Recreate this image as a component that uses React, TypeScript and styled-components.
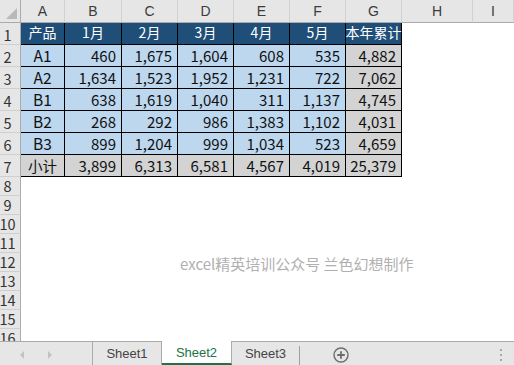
import styled, { createGlobalStyle } from "styled-components"

const GlobalStyle = createGlobalStyle`
  html, body {
    margin: 0;
    padding: 0;
    background: #ffffff;
    overflow: hidden;
  }
  * {
    box-sizing: border-box;
  }
`

const CJK_FONT = `"Noto Sans CJK SC", "Noto Sans", sans-serif`

const Window = styled.div`
  width: 514px;
  height: 365px;
  display: flex;
  flex-direction: column;
  background: #ffffff;
  overflow: hidden;
`

const SheetArea = styled.div`
  position: relative;
  height: 341px;
  overflow: hidden;
`

const Grid = styled.div`
  display: grid;
  grid-template-columns: 21px 44px 57px 56px 56px 56px 56px 56px 71px 1fr;
  grid-template-rows: 23px repeat(7, 22px) repeat(9, 19px);
`

const Corner = styled.div`
  position: relative;
  background: #e6e6e6;
  border-right: 1px solid #ababab;
  border-bottom: 1px solid #ababab;

  &::after {
    content: "";
    position: absolute;
    right: 3px;
    bottom: 3px;
    width: 0;
    height: 0;
    border-left: 11px solid transparent;
    border-bottom: 11px solid #b9b9b9;
  }
`

const ColHead = styled.div`
  display: flex;
  align-items: flex-end;
  justify-content: center;
  padding-bottom: 2px;
  background: #e6e6e6;
  border-right: 1px solid #d2d2d2;
  border-bottom: 1px solid #ababab;
  font-family: "Liberation Sans", sans-serif;
  font-size: 14px;
  line-height: 17px;
  color: #3c3c3c;
`

const RowHead = styled.div`
  display: flex;
  align-items: flex-end;
  justify-content: center;
  padding-right: 5px;
  padding-bottom: 0;
  background: #e6e6e6;
  border-right: 1px solid #ababab;
  border-bottom: 1px solid #cfcfcf;
  font-family: ${CJK_FONT};
  font-size: 14.5px;
  line-height: 18px;
  color: #333333;
  white-space: nowrap;
`

type Variant = "head" | "body" | "sum" | "total"

const cellBg: Record<Variant, string> = {
  head: "#1f4e78",
  body: "#bdd7ee",
  sum: "#d3d3d3",
  total: "#d3d3d3",
}

const Cell = styled.div<{ $variant: Variant }>`
  display: flex;
  align-items: flex-end;
  justify-content: flex-end;
  padding: 0 5px 1px 0;
  background: ${(p) => cellBg[p.$variant]};
  border-right: 1px solid #000000;
  border-bottom: 1px solid #000000;
  color: ${(p) => (p.$variant === "head" ? "#ffffff" : "#111111")};
  font-family: ${CJK_FONT};
  font-size: 15px;
  line-height: 19px;
  white-space: nowrap;
`

const LabelCell = styled(Cell)<{ $cjk?: boolean }>`
  justify-content: center;
  padding-right: 0;
  font-size: ${(p) => (p.$cjk ? "14.5px" : "15.5px")};
`

const HeadCell = styled(Cell)`
  justify-content: center;
  padding: 0 0 2px 0;
  font-size: 14px;
`

const Empty = styled.div``

const Watermark = styled.div`
  position: absolute;
  left: 180px;
  top: 254px;
  font-family: ${CJK_FONT};
  font-size: 15px;
  line-height: 20px;
  color: #b0b0b0;
  white-space: nowrap;
`

const TabBar = styled.div`
  flex: 1;
  display: flex;
  align-items: stretch;
  background: #e6e6e6;
  border-top: 1px solid #ababab;
  position: relative;
`

const NavArea = styled.div`
  width: 93px;
  display: flex;
  align-items: center;
  gap: 24px;
  padding-left: 20px;
  border-right: 1px solid #ababab;
`

const Arrow = styled.span<{ $dir: "left" | "right" }>`
  width: 0;
  height: 0;
  margin-top: 3px;
  border-top: 4px solid transparent;
  border-bottom: 4px solid transparent;
  ${(p) =>
    p.$dir === "left"
      ? "border-right: 4px solid #c2c2c2;"
      : "border-left: 4px solid #c2c2c2;"}
`

const Tab = styled.div<{ $active?: boolean; $width: number }>`
  width: ${(p) => p.$width}px;
  display: flex;
  align-items: center;
  justify-content: center;
  font-family: "Liberation Sans", sans-serif;
  font-size: 13px;
  color: ${(p) => (p.$active ? "#217346" : "#444444")};
  background: ${(p) => (p.$active ? "#ffffff" : "transparent")};
  border-right: 1px solid #ababab;
  border-bottom: ${(p) => (p.$active ? "2px solid #217346" : "none")};
  margin-top: ${(p) => (p.$active ? "-1px" : "0")};
  padding-top: ${(p) => (p.$active ? "1px" : "0")};
`

const LastTab = styled(Tab)`
  border-right: none;
`

const TabSep = styled.div`
  width: 1px;
  margin-top: 4px;
  background: #9f9f9f;
`

const AddButton = styled.div`
  margin-left: 33px;
  align-self: center;
  margin-top: 2px;
  display: flex;
`

const Dots = styled.div`
  position: absolute;
  right: 12px;
  top: 7px;
  display: flex;
  flex-direction: column;
  gap: 3px;

  span {
    width: 2px;
    height: 2px;
    background: #a8a8a8;
  }
`

const columns = ["A", "B", "C", "D", "E", "F", "G", "H", "I"]
const months = ["1月", "2月", "3月", "4月", "5月"]

const rows: [string, number[]][] = [
  ["A1", [460, 1675, 1604, 608, 535]],
  ["A2", [1634, 1523, 1952, 1231, 722]],
  ["B1", [638, 1619, 1040, 311, 1137]],
  ["B2", [268, 292, 986, 1383, 1102]],
  ["B3", [899, 1204, 999, 1034, 523]],
]

const fmt = (n: number) => n.toLocaleString("en-US")
const sum = (a: number[]) => a.reduce((s, v) => s + v, 0)

const PlusIcon = () => (
  <svg width="16" height="16" viewBox="0 0 16 16">
    <circle cx="8" cy="8" r="7" fill="none" stroke="#6d6d6d" strokeWidth="1.4" />
    <path d="M8 4.2v7.6M4.2 8h7.6" stroke="#6d6d6d" strokeWidth="1.8" />
  </svg>
)

const App = () => {
  const totals = months.map((_, i) => sum(rows.map((r) => r[1][i])))
  const grand = sum(totals)

  return (
    <Window>
      <GlobalStyle />
      <SheetArea>
        <Grid>
          <Corner />
          {columns.map((c) => (
            <ColHead key={c}>{c}</ColHead>
          ))}

          <RowHead>1</RowHead>
          <HeadCell $variant="head">产品</HeadCell>
          {months.map((m) => (
            <HeadCell key={m} $variant="head">
              {m}
            </HeadCell>
          ))}
          <HeadCell $variant="head">本年累计</HeadCell>
          <Empty />
          <Empty />

          {rows.map(([name, vals], i) => (
            <>
              <RowHead key={"h" + name}>{i + 2}</RowHead>
              <LabelCell key={"n" + name} $variant="body">
                {name}
              </LabelCell>
              {vals.map((v, j) => (
                <Cell key={name + j} $variant="body">
                  {fmt(v)}
                </Cell>
              ))}
              <Cell key={"s" + name} $variant="sum">
                {fmt(sum(vals))}
              </Cell>
              <Empty key={"e1" + name} />
              <Empty key={"e2" + name} />
            </>
          ))}

          <RowHead>7</RowHead>
          <LabelCell $variant="total" $cjk>
            小计
          </LabelCell>
          {totals.map((t, j) => (
            <Cell key={"t" + j} $variant="total">
              {fmt(t)}
            </Cell>
          ))}
          <Cell $variant="total">{fmt(grand)}</Cell>
          <Empty />
          <Empty />

          {[8, 9, 10, 11, 12, 13, 14, 15, 16].map((n) => (
            <>
              <RowHead key={"r" + n}>{n}</RowHead>
              {columns.map((c) => (
                <Empty key={c + n} />
              ))}
            </>
          ))}
        </Grid>
        <Watermark>excel精英培训公众号 兰色幻想制作</Watermark>
      </SheetArea>

      <TabBar>
        <NavArea>
          <Arrow $dir="left" />
          <Arrow $dir="right" />
        </NavArea>
        <Tab $width={69}>Sheet1</Tab>
        <Tab $width={70} $active>
          Sheet2
        </Tab>
        <LastTab $width={67}>Sheet3</LastTab>
        <TabSep />
        <AddButton>
          <PlusIcon />
        </AddButton>
        <Dots>
          <span />
          <span />
          <span />
        </Dots>
      </TabBar>
    </Window>
  )
}

export default App
